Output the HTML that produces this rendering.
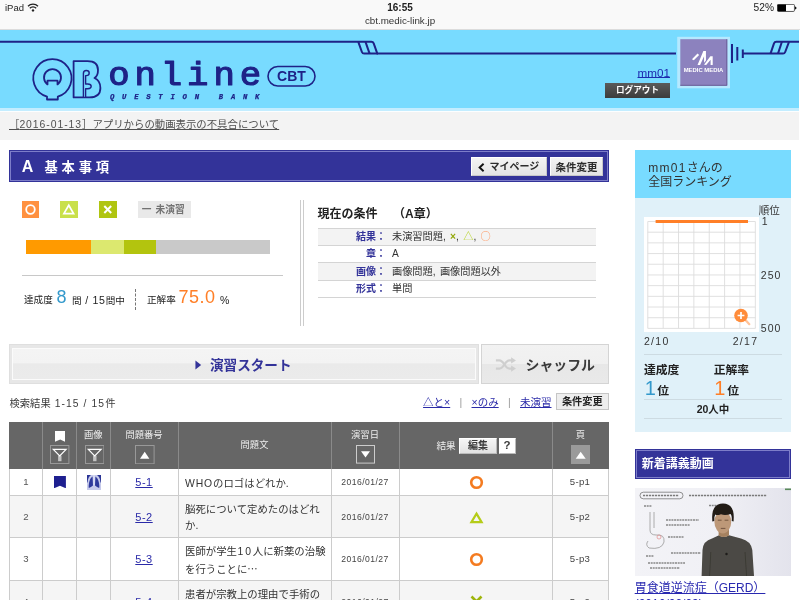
<!DOCTYPE html>
<html lang="ja">
<head>
<meta charset="utf-8">
<title>QB online CBT</title>
<style>
html,body{margin:0;padding:0;}
body{width:800px;height:600px;overflow:hidden;position:relative;background:#fff;
 font-family:"Liberation Sans","Noto Sans CJK JP",sans-serif;color:#333;}
.abs{position:absolute;white-space:nowrap;}
a{color:#2a2aa8;}
/* status bar */
#status{position:absolute;left:0;top:0;width:800px;height:30px;background:#f9f9f9;box-sizing:border-box;border-bottom:1px solid #dcdcdc;}
#status .t{position:absolute;white-space:nowrap;color:#222;}
/* header */
#header{position:absolute;left:0;top:30px;width:800px;height:78px;background:#78dbff;}
#hstrip{position:absolute;left:0;top:108px;width:800px;height:4px;background:#c3edff;box-sizing:border-box;border-bottom:1px solid #fcfeff;}
#notice{position:absolute;left:0;top:112px;width:800px;height:28px;background:#f3f3f3;}
#notice a{position:absolute;left:9px;top:6px;font-size:10.4px;line-height:14px;color:#505050;white-space:nowrap;}
/* title bar */
#tbar{position:absolute;left:9px;top:150.4px;width:599.7px;height:31.2px;background:#333399;box-sizing:border-box;border:1px solid #333399;box-shadow:inset 0 0 0 1px #7d7dc8;}
.btn{position:absolute;box-sizing:border-box;background:#eee;border:1px solid #bbb;color:#222;font-weight:bold;text-align:center;white-space:nowrap;}

.btn.tb{background:linear-gradient(#f4f4f4,#e4e4e4);border:1px solid #fff;border-right-color:#c8c8c8;border-bottom-color:#c8c8c8;}
.crow{position:absolute;left:317.5px;width:278px;box-sizing:border-box;border-bottom:1px solid #d4d4d4;font-size:10px;white-space:nowrap;}
.crow.g{background:#f3f3f3;}
.crow .cl{position:absolute;right:209.5px;bottom:0;line-height:17px;font-weight:bold;color:#333399;}
.crow .cv{position:absolute;left:74.5px;bottom:0;line-height:17px;color:#333;font-size:10.2px;word-spacing:1.5px;}
.crow .cv b{font-family:"Noto Sans CJK JP",sans-serif;font-weight:normal;}
.bigbtn{box-sizing:border-box;border:1px solid #d4d4d4;background:linear-gradient(#f2f2f2 0,#f0f0f0 49%,#e7e7e7 51%,#e9e9e9 100%);}
.bigbtn.st{background:#e7e7e7;border-color:#dfdfdf;}
.bigbtn .in{position:absolute;left:2px;top:2.5px;right:2px;bottom:2.5px;border:1px solid #fbfbfb;background:linear-gradient(#f4f4f4 0,#f3f3f3 47%,#eaeaea 49%,#ebebeb 100%);}

#tbl{position:absolute;left:9px;top:422px;width:599.5px;height:200px;border-left:1px solid #ccc;border-right:1px solid #ccc;box-sizing:border-box;}
#tbl .r{position:absolute;left:-1px;width:599.5px;box-sizing:border-box;border-bottom:1px solid #ccc;background:#fff;}
#tbl .r.g{background:#f5f5f5;}
#tbl .r.hd{background:#666;border-bottom:none;}
#tbl .c{position:absolute;top:0;bottom:0;box-sizing:border-box;border-right:1px solid #ccc;}
#tbl .r .c:first-child{border-left:1px solid #ccc;}
#tbl .hd .c{border-right:1px solid #8a8a8a;border-left-color:#666 !important;}
#tbl .ht{position:absolute;left:0;right:0;text-align:center;font-size:9.3px;line-height:12px;color:#eee;white-space:nowrap;}
#tbl .ic{position:absolute;}
#tbl .ct{position:absolute;left:0;right:0;text-align:center;line-height:14px;white-space:nowrap;}
#tbl .qt{position:absolute;left:6.5px;top:5.65px;font-size:10.4px;color:#333;white-space:nowrap;}
#tbl .qt div{height:16.6px;line-height:17px;}
#tbl .eb{box-sizing:border-box;background:linear-gradient(#f6f6f6,#e2e2e2);border:1px solid #fff;border-right-color:#bbb;border-bottom-color:#bbb;color:#3c3c3c;font-weight:bold;font-size:10px;line-height:13.5px;text-align:center;}
#tbl .eb.q{background:#fff;font-size:11.5px;}

#side{position:absolute;left:634.7px;top:150px;width:156.5px;height:281.6px;background:#e0f1f9;}
#side .sep{left:9.3px;width:138px;height:1px;background:#cddbe2;}
#newv{position:absolute;left:634.7px;top:449.3px;width:156.5px;height:29.5px;box-sizing:border-box;background:#333399;border:1px solid #333399;box-shadow:inset 0 0 0 1px #7d7dc8;}
#newv span{position:absolute;left:6px;top:6px;color:#fff;font-weight:bold;font-size:12px;line-height:16px;white-space:nowrap;}
#thumb{position:absolute;left:634.7px;top:488px;width:156.8px;height:88px;overflow:hidden;}
</style>
</head>
<body><div id="wrap" style="position:absolute;left:0;top:0;width:800px;height:600px;will-change:transform;">

<!-- STATUS BAR -->
<div id="status">
 <div class="t" style="left:5px;top:2px;font-size:9.5px;line-height:12px;">iPad</div>
 <svg class="abs" style="left:27px;top:3px" width="12" height="9" viewBox="0 0 12 9"><path d="M1 3.2 A7 7 0 0 1 11 3.2" fill="none" stroke="#222" stroke-width="1.3"/><path d="M2.8 5.2 A4.5 4.5 0 0 1 9.2 5.2" fill="none" stroke="#222" stroke-width="1.3"/><circle cx="6" cy="7.4" r="1.2" fill="#222"/></svg>
 <div class="t" style="left:360px;width:80px;text-align:center;top:2px;font-size:10px;line-height:12px;font-weight:bold;">16:55</div>
 <div class="t" style="left:340px;width:120px;text-align:center;top:15px;font-size:9.8px;line-height:12px;color:#333;">cbt.medic-link.jp</div>
 <div class="t" style="left:739px;width:35px;text-align:right;top:2.3px;font-size:10.2px;line-height:12px;">52%</div>
 <svg class="abs" style="left:776.5px;top:4px" width="20" height="8" viewBox="0 0 20 8"><rect x="0.35" y="0.35" width="17.1" height="7.1" rx="1.1" fill="#fff" stroke="#111" stroke-width="0.7"/><path d="M0.5 1.2 Q0.5 0.5 1.2 0.5 H9 V7.3 H1.2 Q0.5 7.3 0.5 6.6 Z" fill="#000"/><path d="M18 2.4 Q19.5 2.8 19.5 3.9 Q19.5 5 18 5.4 Z" fill="#111"/></svg>
</div>

<!-- HEADER -->
<div id="header">
 <svg class="abs" style="left:0;top:0" width="800" height="78" viewBox="0 30 800 78">
  <g fill="none" stroke="#1e2287" stroke-width="2" stroke-linejoin="round" stroke-linecap="butt">
   <path d="M0 41.8 H371.3 Q373.1 41.8 373.7 43.4 L377.3 53.6 H676"/>
   <path d="M358.3 41.8 L361.9 52 Q362.5 53.6 364.2 53.6 H378"/>
   <path d="M365.5 41.8 L369.6 53.6"/>
   <path d="M732 44 V63 M737.3 47 V60.5 M742.8 49.5 V58"/>
   <path d="M743 53.6 H783 Q784.6 53.6 785.2 52 L789 41.8"/>
   <path d="M770.5 53.6 L774 43.4 Q774.6 41.8 776.3 41.8 H800"/>
   <path d="M778 53.6 L781.9 41.8"/>
  </g>
  <!-- QB logo -->
  <g fill="#78dbff" stroke="#1e2287" stroke-width="1.8" stroke-linejoin="round"><title>QB</title>
   <path d="M47 96.62 A19.1 19.1 0 1 1 57.8 96.62 V99.5 H47 Z"/>
   <path d="M47.5 80.6 H57.5 V84.4 A8.5 8.5 0 1 0 47.5 84.4 Z"/>
   <path d="M73.6 61.2 H87.5 Q98 61.2 98 70 Q98 76 94.5 78 Q100.4 80.5 100.4 88 Q100.4 97.4 89.5 97.4 H73.6 Z"/>
   <path d="M83.4 97.4 V73.5 Q83.4 70.5 86.3 70.5 Q89.2 70.5 89.2 73 Q89.2 75.6 86.3 75.6 H85.6 V84 H87.8 Q91.2 84 91.2 86.3 Q91.2 88.7 87.8 88.7 H85.6 V97.4 Z" stroke-width="1.4"/>
  </g>
  <text transform="translate(108.2 85.2) scale(1.15 1.07)" font-family="Liberation Mono, monospace" font-size="31" letter-spacing="4.27" fill="#1e2287" stroke="#1e2287" stroke-width="1.1" stroke-linejoin="round">online</text>
  <text x="110" y="99" font-family="Liberation Mono, monospace" font-weight="bold" font-style="italic" font-size="7.2" letter-spacing="7.78" fill="#1e2287" stroke="#1e2287" stroke-width="0.25">QUESTION BANK</text>
  <rect x="268" y="66.5" width="47" height="19.5" rx="9.75" fill="none" stroke="#1e2287" stroke-width="1.6"/>
  <text x="291.5" y="81.3" text-anchor="middle" font-family="Liberation Sans, sans-serif" font-weight="bold" font-size="14" fill="#1e2287">CBT</text>
  <!-- medic media box -->
  <rect x="677.2" y="36.8" width="52.8" height="51.5" fill="#b5e9ff"/>
  <rect x="680.3" y="39.2" width="47" height="46.6" fill="#8c82be"/>
  <path d="M680.3 85.3 H726.8 V39.2" fill="none" stroke="#5a4f86" stroke-width="1" opacity="0.7"/>
  <g transform="translate(670 30) scale(0.11667)" fill="#fff">
   <path d="M188 250 L236 202 L250 214 L204 260 Z"/>
   <path d="M236 300 L286 180 L308 180 L308 262 L292 280 L292 226 L258 300 Z"/>
   <path d="M292 298 L346 224 L366 224 L366 300 L348 300 L348 254 L310 300 Z"/>
  </g>
  <text x="703.5" y="71.9" text-anchor="middle" font-family="Liberation Sans, sans-serif" font-weight="bold" font-size="5.9" fill="#fff">MEDIC MEDIA</text>
 </svg>
 <a href="#" class="abs" style="right:130px;top:36px;font-size:11.7px;line-height:14px;color:#1c2bb0;text-underline-offset:0.2px;">mm01</a>
 <div class="abs" style="left:605px;top:53px;width:65px;height:15px;background:linear-gradient(#5a5a5a,#3c3c3c);color:#fff;font-weight:bold;font-size:8.6px;line-height:15px;text-align:center;">ログアウト</div>
</div>
<div id="hstrip"></div>

<!-- NOTICE -->
<div id="notice"><a href="#">［<span style="letter-spacing:0.95px;">2016-01-13</span>］アプリからの動画表示の不具合について</a></div>

<!-- TITLE BAR -->
<div id="tbar">
 <div class="abs" style="left:11.7px;top:7.5px;color:#fff;font-weight:bold;font-size:16px;line-height:16px;">A</div>
 <div class="abs" style="left:34.5px;top:8.5px;color:#fff;font-weight:bold;font-size:13.3px;line-height:16px;letter-spacing:3.8px;">基本事項</div>
 <div class="btn tb" style="left:461px;top:5.2px;width:75.5px;height:19.8px;color:#2c2c2c;"><svg style="position:absolute;left:6px;top:5px" width="7" height="9" viewBox="0 0 7 9"><path d="M5.6 0.8 L1.6 4.5 L5.6 8.2" fill="none" stroke="#111" stroke-width="1.9"/></svg><span style="position:absolute;left:17.5px;top:0;line-height:18px;font-size:10px;">マイページ</span></div>
 <div class="btn tb" style="left:540px;top:5.2px;width:52.8px;height:19.8px;font-size:10.5px;line-height:18px;color:#2c2c2c;">条件変更</div>
</div>

<!-- STATS PANEL -->
<div id="stats">
 <div class="abs" style="left:22px;top:201px;width:17px;height:17px;background:#ff9140;"><svg width="17" height="17" viewBox="0 0 17 17"><circle cx="8.5" cy="8.5" r="4.3" fill="none" stroke="#fff" stroke-width="1.8"/></svg></div>
 <div class="abs" style="left:60px;top:201px;width:17.5px;height:17px;background:#c9e04a;"><svg width="17.5" height="17" viewBox="0 0 17.5 17"><path d="M8.75 4.2 L13.6 12.6 H3.9 Z" fill="none" stroke="#fff" stroke-width="1.7" stroke-linejoin="miter"/></svg></div>
 <div class="abs" style="left:99.2px;top:201px;width:17.6px;height:17px;background:#b0c511;"><svg width="17.5" height="17" viewBox="0 0 17.5 17"><path d="M5.3 5 L12.2 12 M12.2 5 L5.3 12" fill="none" stroke="#fff" stroke-width="2"/></svg></div>
 <div class="abs" style="left:138px;top:201px;width:53px;height:17px;box-sizing:border-box;padding-left:3.8px;background:#e9e9e9;color:#727272;font-weight:bold;font-size:9.7px;line-height:17px;word-spacing:1.4px;">一 未演習</div>
 <div class="abs" style="left:26px;top:240px;width:243.5px;height:14px;background:#c9c9c9;">
  <div style="position:absolute;left:0;top:0;width:65px;height:14px;background:#ff9a00;"></div>
  <div style="position:absolute;left:65px;top:0;width:33px;height:14px;background:#dce86f;"></div>
  <div style="position:absolute;left:98px;top:0;width:32px;height:14px;background:#b3c40e;"></div>
 </div>
 <div class="abs" style="left:22px;top:275px;width:261px;height:1px;background:#c8c8c8;"></div>
 <div class="abs" style="left:24px;top:294px;font-size:9.6px;line-height:12px;color:#222;">達成度</div>
 <div class="abs" style="left:56.5px;top:286.8px;font-size:18px;line-height:20px;color:#3399cc;">8</div>
 <div class="abs" style="left:72px;top:294px;font-size:9.6px;line-height:12px;color:#222;">問<span style="letter-spacing:0.7px;font-size:10.6px;"> / 15</span>問中</div>
 <div class="abs" style="left:135px;top:289px;width:0;height:21px;border-left:1px dashed #777;"></div>
 <div class="abs" style="left:147px;top:294px;font-size:9.6px;line-height:12px;color:#222;">正解率</div>
 <div class="abs" style="left:178.5px;top:286.6px;font-size:18px;line-height:20px;letter-spacing:0.5px;color:#ff7f27;">75.0</div>
 <div class="abs" style="left:220px;top:293.5px;font-size:10.5px;line-height:12px;color:#222;">%</div>
 <div class="abs" style="left:300px;top:200px;width:1px;height:126px;background:#ccc;"></div>
 <div class="abs" style="left:303px;top:200px;width:1px;height:126px;background:#ccc;"></div>
</div>

<!-- CONDITIONS -->
<div id="cond">
 <div class="abs" style="left:317.5px;top:206px;font-size:12px;line-height:16px;font-weight:bold;color:#222;">現在の条件</div>
 <div class="abs" style="left:393px;top:206px;font-size:12px;line-height:16px;font-weight:bold;color:#222;">（A章）</div>
 <div class="crow g" style="top:228px;height:18px;border-top:1px solid #d4d4d4;"><span class="cl">結果：</span><span class="cv">未演習問題, <i style="color:#93a80a;font-style:normal;font-weight:bold;">×</i>, <b style="color:#b9d532;font-weight:normal;">△</b>, <b style="color:#ff9a66;font-weight:normal;">○</b></span></div>
 <div class="crow" style="top:246px;height:17px;"><span class="cl">章：</span><span class="cv">A</span></div>
 <div class="crow g" style="top:263px;height:18px;"><span class="cl">画像：</span><span class="cv">画像問題, 画像問題以外</span></div>
 <div class="crow" style="top:281px;height:17px;"><span class="cl">形式：</span><span class="cv">単問</span></div>
</div>

<!-- START / SHUFFLE -->
<div class="abs bigbtn st" style="left:9px;top:344px;width:470px;height:39.5px;">
 <div class="in"></div>
 <svg class="abs" style="left:185px;top:15px" width="7" height="10" viewBox="0 0 8 10" preserveAspectRatio="none"><path d="M0.5 0.5 L7 5 L0.5 9.5 Z" fill="#333399"/></svg>
 <div class="abs" style="left:200px;top:10.5px;font-size:13.6px;line-height:20px;font-weight:bold;color:#333399;">演習スタート</div>
</div>
<div class="abs bigbtn" style="left:481px;top:344px;width:127.5px;height:39.5px;">
 <svg class="abs" style="left:12.5px;top:12px" width="21.5" height="15" viewBox="0 0 24 16"><g fill="none" stroke="#cfcfcf" stroke-width="2.5"><path d="M1 3.5 H5 C10 3.5 11 12.5 16 12.5 H19"/><path d="M1 12.5 H5 C10 12.5 11 3.5 16 3.5 H19"/></g><path d="M18 0 L23.5 3.5 L18 7 Z M18 9 L23.5 12.5 L18 16 Z" fill="#cfcfcf"/></svg>
 <div class="abs" style="left:43.5px;top:9.5px;font-size:13.9px;line-height:20px;font-weight:bold;color:#3a3a3a;">シャッフル</div>
</div>

<!-- RESULT LINE -->
<div class="abs" style="left:9.5px;top:396.5px;font-size:10.3px;line-height:13px;color:#3a3a3a;">検索結果<span style="letter-spacing:1.1px;"> 1-15 / 15</span>件</div>
<div class="abs" style="right:248.5px;top:396px;font-size:10.5px;line-height:13px;color:#999;"><a href="#">△と×</a><span style="margin:0 9.3px;">|</span><a href="#">×のみ</a><span style="margin:0 9.3px;">|</span><a href="#">未演習</a></div>
<div class="btn" style="border-color:#c6c6c6;left:556px;top:392.5px;width:52.5px;height:17.5px;font-size:10.2px;line-height:15.5px;">条件変更</div>
<!-- TABLE -->
<div id="tbl">
<div class="r hd" style="top:0;height:47px;"><div class="c" style="left:0px;width:34px;"></div><div class="c" style="left:34px;width:34px;"><svg class="abs" style="left:11.8px;top:9px" width="10.4" height="10.8" viewBox="0 0 10.4 10.8"><path d="M0 0 H10.4 V10.8 L5.2 8.6 L0 10.8 Z" fill="#fff"/></svg><svg class="ic" style="left:7.2px;top:23.2px" width="19.4" height="19" viewBox="0 0 19.4 19"><rect x="0.5" y="0.5" width="18.4" height="18" fill="none" stroke="#999"/><rect x="8.1" y="10.6" width="3.4" height="5.6" fill="#c4c4c4"/><path d="M3.3 4.4 H16.1 L9.7 10.9 Z" fill="none" stroke="#fff" stroke-width="1.2" stroke-linejoin="miter"/></svg></div><div class="c" style="left:68px;width:33.5px;"><span class="ht" style="top:7.3px;">画像</span><svg class="ic" style="left:7.5px;top:23.2px" width="19.4" height="19" viewBox="0 0 19.4 19"><rect x="0.5" y="0.5" width="18.4" height="18" fill="none" stroke="#999"/><rect x="8.1" y="10.6" width="3.4" height="5.6" fill="#c4c4c4"/><path d="M3.3 4.4 H16.1 L9.7 10.9 Z" fill="none" stroke="#fff" stroke-width="1.2" stroke-linejoin="miter"/></svg></div><div class="c" style="left:101.5px;width:68.0px;"><span class="ht" style="top:7.3px;">問題番号</span><svg class="ic" style="left:24.5px;top:23px" width="19.6" height="19.3" viewBox="0 0 19.6 19.3"><rect x="0.5" y="0.5" width="18.6" height="18.3" fill="none" stroke="#999"/><path d="M5 13.8 L9.7 6.8 L14.4 13.8 Z" fill="#fff"/></svg></div><div class="c" style="left:169.5px;width:153.0px;"><span class="ht" style="top:17px;">問題文</span></div><div class="c" style="left:322.5px;width:68.0px;"><span class="ht" style="top:7.3px;">演習日</span><svg class="ic" style="left:24.7px;top:23.4px" width="19" height="18.6" viewBox="0 0 19 18.6"><rect x="0.5" y="0.5" width="18" height="17.6" fill="none" stroke="#ccc"/><path d="M5 6.2 L9.5 12.6 L14 6.2 Z" fill="#fff"/></svg></div><div class="c" style="left:390.5px;width:153.0px;"><span class="abs" style="left:37px;top:17px;font-size:9.6px;line-height:13px;color:#eee;">結果</span><span class="abs eb" style="left:59.5px;top:16px;width:38px;height:15.5px;">編集</span><span class="abs eb q" style="left:99px;top:16px;width:17px;height:15.5px;">?</span></div><div class="c" style="left:543.5px;width:56.0px;border-right:none;"><span class="ht" style="top:7.3px;">頁</span><svg class="ic" style="left:18.2px;top:23px" width="19.3" height="19.3" viewBox="0 0 19.3 19.3"><rect x="0" y="0" width="19.3" height="19.3" fill="#9a9a9a"/><path d="M4.7 13.8 L9.7 6.8 L14.7 13.8 Z" fill="#fff"/></svg></div></div>
<div class="r" style="top:47px;height:27px;"><div class="c" style="left:0px;width:34px;"><span class="ct" style="top:6.0px;font-size:9.6px;color:#555;">1</span></div><div class="c" style="left:34px;width:34px;"><svg class="abs" style="left:11.3px;top:7.2px" width="11.9" height="12.3" viewBox="0 0 11.9 12.3"><path d="M0 0 H11.9 V12.3 L5.95 9.8 L0 12.3 Z" fill="#1e2090"/></svg></div><div class="c" style="left:68px;width:33.5px;"><svg class="abs" style="left:10.2px;top:5.7px" width="14" height="15" viewBox="0 0 14 15"><rect width="14" height="15" fill="#c6caeb"/><path d="M0 0 H4 Q1 2 0.6 7 L0 8 Z M14 0 H10 Q13 2 13.4 7 L14 8 Z" fill="#2b3596"/><path d="M5.6 1.6 Q3 3 2 8 Q1.4 11.5 1.8 13 Q4 12.6 6 10.6 Z M8.4 1.6 Q11 3 12 8 Q12.6 11.5 12.2 13 Q10 12.6 8 10.6 Z" fill="#2f3a9c"/><path d="M6.4 0 H7.6 V10 H6.4 Z" fill="#dfe2f6"/></svg></div><div class="c" style="left:101.5px;width:68.0px;"><a href="#" class="ct" style="top:5.5px;font-size:11px;line-height:15px;letter-spacing:0.5px;">5-1</a></div><div class="c" style="left:169.5px;width:153.0px;"><div class="qt"><div><span style="letter-spacing:0.9px;">WHO</span>のロゴはどれか.</div></div></div><div class="c" style="left:322.5px;width:68.0px;"><span class="ct" style="top:6.0px;font-size:8.6px;color:#444;letter-spacing:0.45px;">2016/01/27</span></div><div class="c" style="left:390.5px;width:153.0px;"><svg class="abs" style="left:69px;top:5.5px" width="15" height="15" viewBox="0 0 15 15"><circle cx="7.5" cy="7.5" r="5.3" fill="none" stroke="#f47b20" stroke-width="2.6"/></svg></div><div class="c" style="left:543.5px;width:56.0px;"><span class="ct" style="top:6.0px;font-size:9.6px;color:#444;letter-spacing:0.3px;">5-p1</span></div></div>
<div class="r g" style="top:74px;height:42px;"><div class="c" style="left:0px;width:34px;"><span class="ct" style="top:14.25px;font-size:9.6px;color:#555;">2</span></div><div class="c" style="left:34px;width:34px;"></div><div class="c" style="left:68px;width:33.5px;"></div><div class="c" style="left:101.5px;width:68.0px;"><a href="#" class="ct" style="top:13.75px;font-size:11px;line-height:15px;letter-spacing:0.5px;">5-2</a></div><div class="c" style="left:169.5px;width:153.0px;"><div class="qt" style="top:4.65px;"><div>脳死について定めたのはどれ</div><div>か.</div></div></div><div class="c" style="left:322.5px;width:68.0px;"><span class="ct" style="top:14.25px;font-size:8.6px;color:#444;letter-spacing:0.45px;">2016/01/27</span></div><div class="c" style="left:390.5px;width:153.0px;"><svg class="abs" style="left:69px;top:14.8px" width="15" height="13" viewBox="0 0 15 13"><path d="M7.5 2.6 L12.6 11.2 H2.4 Z" fill="none" stroke="#b5cc18" stroke-width="2.2"/></svg></div><div class="c" style="left:543.5px;width:56.0px;"><span class="ct" style="top:14.25px;font-size:9.6px;color:#444;letter-spacing:0.3px;">5-p2</span></div></div>
<div class="r" style="top:116px;height:43px;"><div class="c" style="left:0px;width:34px;"><span class="ct" style="top:14.25px;font-size:9.6px;color:#555;">3</span></div><div class="c" style="left:34px;width:34px;"></div><div class="c" style="left:68px;width:33.5px;"></div><div class="c" style="left:101.5px;width:68.0px;"><a href="#" class="ct" style="top:13.75px;font-size:11px;line-height:15px;letter-spacing:0.5px;">5-3</a></div><div class="c" style="left:169.5px;width:153.0px;"><div class="qt" style="top:5.15px;"><div>医師が学生<span style="letter-spacing:1.9px;margin-left:0.5px;">10</span>人に新薬の治験</div><div>を行うことに<span style="font-family:'Noto Sans CJK JP',sans-serif;">…</span></div></div></div><div class="c" style="left:322.5px;width:68.0px;"><span class="ct" style="top:14.25px;font-size:8.6px;color:#444;letter-spacing:0.45px;">2016/01/27</span></div><div class="c" style="left:390.5px;width:153.0px;"><svg class="abs" style="left:69px;top:13.8px" width="15" height="15" viewBox="0 0 15 15"><circle cx="7.5" cy="7.5" r="5.3" fill="none" stroke="#f47b20" stroke-width="2.6"/></svg></div><div class="c" style="left:543.5px;width:56.0px;"><span class="ct" style="top:14.25px;font-size:9.6px;color:#444;letter-spacing:0.3px;">5-p3</span></div></div>
<div class="r g" style="top:159px;height:42.5px;"><div class="c" style="left:0px;width:34px;"><span class="ct" style="top:14.25px;font-size:9.6px;color:#555;">4</span></div><div class="c" style="left:34px;width:34px;"></div><div class="c" style="left:68px;width:33.5px;"></div><div class="c" style="left:101.5px;width:68.0px;"><a href="#" class="ct" style="top:13.75px;font-size:11px;line-height:15px;letter-spacing:0.5px;">5-4</a></div><div class="c" style="left:169.5px;width:153.0px;"><div class="qt" style="top:4.65px;"><div>患者が宗教上の理由で手術の</div><div>輸血を拒否…</div></div></div><div class="c" style="left:322.5px;width:68.0px;"><span class="ct" style="top:14.25px;font-size:8.6px;color:#444;letter-spacing:0.45px;">2016/01/27</span></div><div class="c" style="left:390.5px;width:153.0px;"><svg class="abs" style="left:70px;top:14.2px" width="13" height="13" viewBox="0 0 13 13"><path d="M1.5 1.5 L11.5 11.5 M11.5 1.5 L1.5 11.5" fill="none" stroke="#9fb50c" stroke-width="2.6"/></svg></div><div class="c" style="left:543.5px;width:56.0px;"><span class="ct" style="top:14.25px;font-size:9.6px;color:#444;letter-spacing:0.3px;">5-p2</span></div></div>
</div>
<!-- SIDEBAR -->
<div id="side">
 <div class="abs" style="left:0;top:0;width:156.5px;height:47.5px;background:#78dbff;"></div>
 <div class="abs" style="left:13.5px;top:10.7px;font-size:12px;line-height:14.6px;color:#333;white-space:normal;width:135px;"><span style="letter-spacing:1.3px;">mm01</span>さんの<br>全国ランキング</div>
 <div class="abs" style="left:124px;top:54.5px;font-size:10.5px;line-height:11px;color:#333;">順位<br><span style="margin-left:3px;">1</span></div>
 <div class="abs" style="left:9.3px;top:67.2px;width:115.5px;height:115.3px;background:#fff;"></div>
 <svg class="abs" style="left:0;top:0" width="157" height="282" viewBox="0 0 157 282">
  <path d="M12.80 71.50 V178.40 M28.16 71.50 V178.40 M43.52 71.50 V178.40 M58.88 71.50 V178.40 M74.24 71.50 V178.40 M89.60 71.50 V178.40 M104.96 71.50 V178.40 M120.32 71.50 V178.40 M12.80 71.50 H120.32 M12.80 82.19 H120.32 M12.80 92.88 H120.32 M12.80 103.57 H120.32 M12.80 114.26 H120.32 M12.80 124.95 H120.32 M12.80 135.64 H120.32 M12.80 146.33 H120.32 M12.80 157.02 H120.32 M12.80 167.71 H120.32 M12.80 178.40 H120.32 " fill="none" stroke="#dcdcdc" stroke-width="0.9"/>
  <path d="M20.6 71.5 H113" stroke="#ff7f27" stroke-width="3" fill="none"/>
  <g>
   <path d="M110.5 170 L114.3 174.2" stroke="#ffc399" stroke-width="2.2" stroke-linecap="round"/>
   <circle cx="106" cy="165.5" r="6.8" fill="#ff8c3a"/>
   <path d="M102.6 165.5 H109.4 M106 162.1 V168.9" stroke="#fff" stroke-width="1.7"/>
  </g>
 </svg>
 <div class="abs" style="left:126px;top:119px;font-size:10.5px;line-height:12px;color:#333;letter-spacing:1.1px;">250</div>
 <div class="abs" style="left:126px;top:172.2px;font-size:10.5px;line-height:12px;color:#333;letter-spacing:1.1px;">500</div>
 <div class="abs" style="left:9.3px;top:185.3px;font-size:10.5px;line-height:12px;color:#333;letter-spacing:1.3px;">2/10</div>
 <div class="abs" style="left:98px;top:185.3px;font-size:10.5px;line-height:12px;color:#333;letter-spacing:1.3px;">2/17</div>
 <div class="abs sep" style="top:203.5px;"></div>
 <div class="abs" style="left:9.3px;top:213.3px;font-size:11.8px;line-height:15px;font-weight:bold;color:#222;">達成度</div>
 <div class="abs" style="left:79px;top:213.3px;font-size:11.8px;line-height:15px;font-weight:bold;color:#222;">正解率</div>
 <div class="abs" style="left:10px;top:226px;font-size:20px;line-height:24px;color:#3399cc;">1</div>
 <div class="abs" style="left:22.5px;top:234px;font-size:11.8px;line-height:15px;font-weight:bold;color:#222;">位</div>
 <div class="abs" style="left:79.5px;top:226px;font-size:20px;line-height:24px;color:#ff7f27;">1</div>
 <div class="abs" style="left:92.5px;top:234px;font-size:11.8px;line-height:15px;font-weight:bold;color:#222;">位</div>
 <div class="abs sep" style="top:248.5px;"></div>
 <div class="abs" style="left:9.3px;width:138px;text-align:center;top:252px;font-size:10.5px;line-height:14px;font-weight:bold;color:#222;">20人中</div>
 <div class="abs sep" style="top:267.5px;"></div>
</div>
<div id="newv"><span>新着講義動画</span></div>
<div id="thumb">
 <svg width="157" height="88" viewBox="0 0 157 88">
  <defs><linearGradient id="wb" x1="0" x2="1" y1="0" y2="0"><stop offset="0" stop-color="#f3f3f7"/><stop offset="0.55" stop-color="#f0f0f5"/><stop offset="1" stop-color="#e3e3ec"/></linearGradient><filter id="bl" x="-5%" y="-5%" width="110%" height="110%"><feGaussianBlur stdDeviation="0.4"/></filter></defs>
  <rect width="157" height="88" fill="url(#wb)"/>
  <g filter="url(#bl)">
  <rect x="5" y="4.2" width="43" height="6.6" rx="3.3" fill="none" stroke="#666" stroke-width="0.7"/>
  <path d="M8 7.5 H44 M54 7.5 H132" stroke="#7a7a7a" stroke-width="1.6" stroke-dasharray="2.2 0.8"/>
  <path d="M9 18 H17 M74 17.5 H92 M31 32 H64 M31 37 H55 M33 49 H49 M36 65 H66 M11 68 H19 M13 75 H50 M15 80 H45" stroke="#888" stroke-width="1.5" stroke-dasharray="2 0.7"/>
  <path d="M15 24 V42 Q15 47 21 47 Q30 46 29 54 Q27 62 14 60 Q10 57 13 53 M19 24 V40" fill="none" stroke="#999" stroke-width="0.8"/>
  <circle cx="24" cy="49" r="2" fill="none" stroke="#e08a8a" stroke-width="0.7"/>
  <path d="M66.6 88 L67.5 62 Q68 53 77 50.5 L84 47.3 Q88.5 50.5 94 47.3 L106 50.5 Q116 53 117.3 62 L119 88 Z" fill="#4c4a44"/>
  <path d="M75.8 64 L74.6 88 M110 64 L111.6 88" stroke="#3b3a35" stroke-width="1" fill="none"/>
  <path d="M83.6 40 H94 V47.5 Q88.5 50.5 83.6 47.5 Z" fill="#a5815f"/>
  <ellipse cx="87.8" cy="34" rx="8.4" ry="11.4" fill="#bd9878"/>
  <path d="M77.3 33.5 Q75.8 15.5 88 15.5 Q100.2 15.5 98.6 33.5 L96.7 33 Q97.2 28 95.6 26 Q90 27.8 86 26.2 Q82 27.8 80.3 26.6 Q78.8 29 79.3 33 Z" fill="#211c19"/>
  <path d="M82.8 32.2 H86.6 M89.6 32.2 H93.4 M85.8 40.4 H90.4" stroke="#6b4e3a" stroke-width="0.9"/>
  <circle cx="91.5" cy="66" r="1.2" fill="#1a1a1a"/>
  </g>
  <rect x="150" y="0.5" width="6" height="1.6" fill="#5a8a5a"/>
 </svg>
</div>
<a href="#" class="abs" style="left:634.7px;top:579.6px;font-size:12px;line-height:16px;color:#2929b0;white-space:normal;width:150px;">胃食道逆流症（GERD）<br>(2016/02/09)</a>

<div style="position:absolute;left:799px;top:30px;width:1px;height:570px;background:#fff;"></div>
</div></body>
</html>
